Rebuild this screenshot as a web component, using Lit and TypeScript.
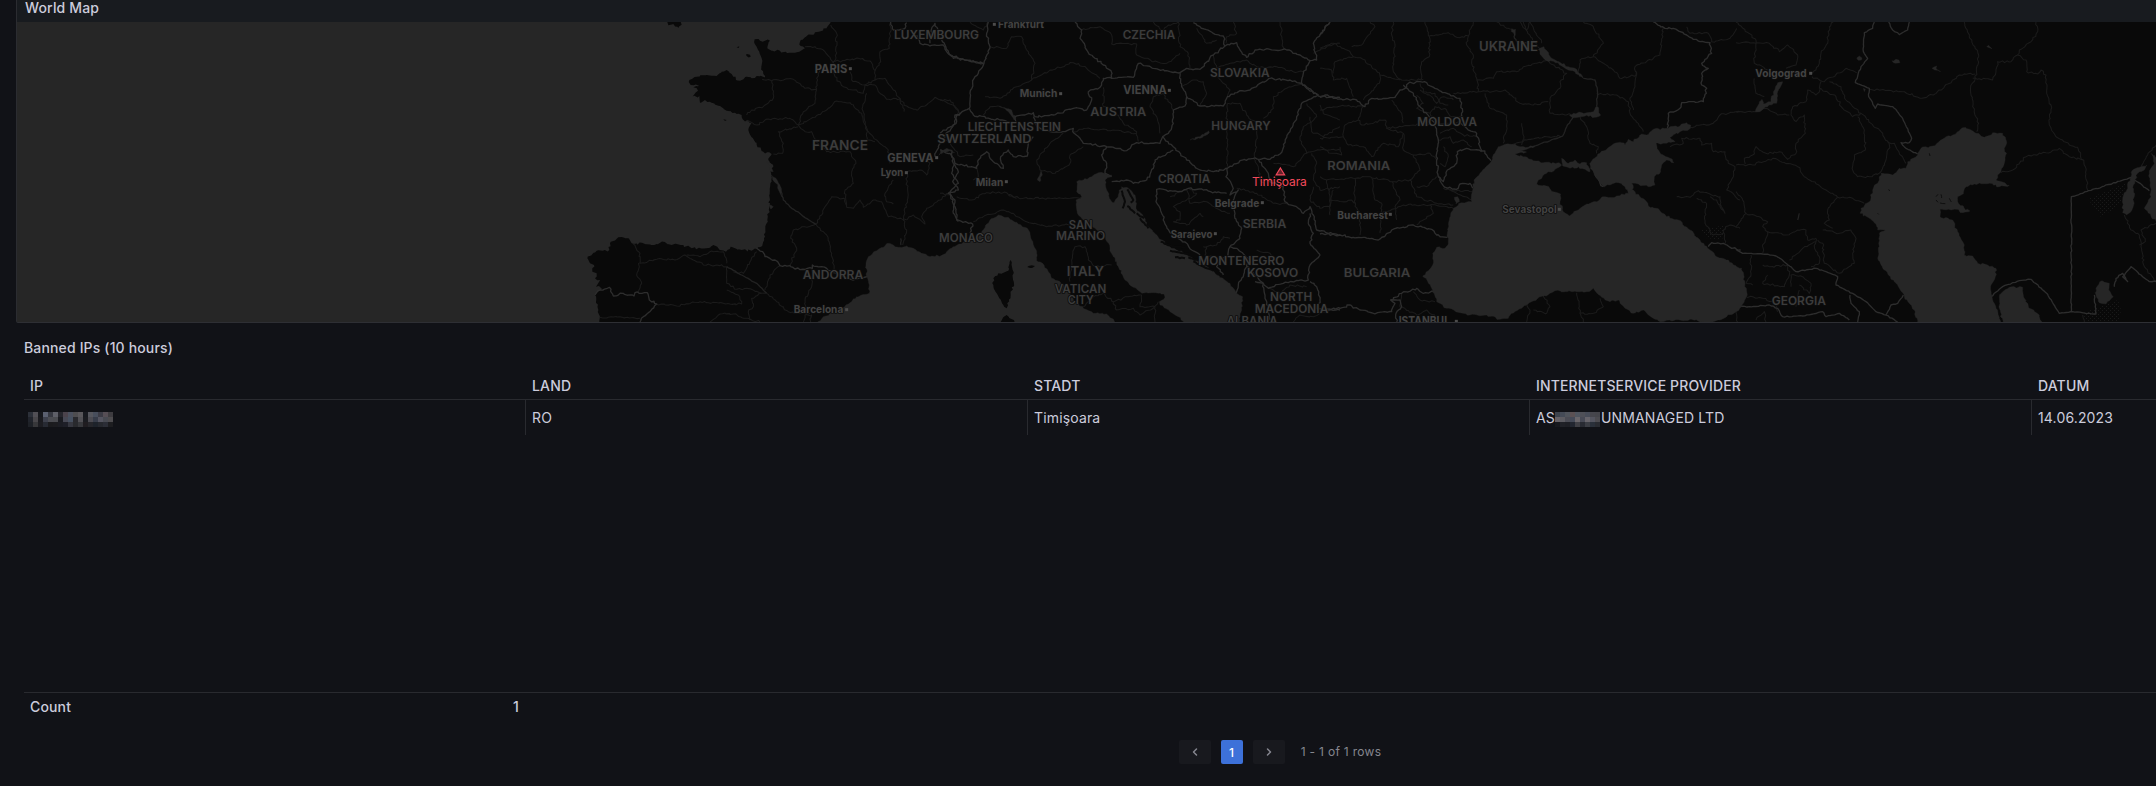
import { LitElement, html, svg, css } from "lit";
import { customElement } from "lit/decorators.js";

type Label = [string, number, number, number, number, number?, number?];

interface Sheet {
  x: number;
  seas?: string[];
  lands?: string[];
  rivers?: string[];
  major?: string[];
  minor?: string[];
  labels?: Label[];
}

/* Adds a deterministic natural irregularity to a coarse outline. */
function rough(src: string, amp: number, closed: boolean): string {
  const pts = src.trim().split(/\s+/).map((p) => p.split(",").map(Number));
  let seed = 7 + Math.abs(pts[0][0] * 31 + pts[0][1] * 17) + pts.length * 13;
  const rnd = () => {
    seed = (seed * 16807 + 11) % 2147483647;
    return seed / 2147483647 - 0.5;
  };
  const out: string[] = [];
  const n = closed ? pts.length : pts.length - 1;
  for (let i = 0; i < n; i++) {
    const a = pts[i];
    const b = pts[(i + 1) % pts.length];
    const len = Math.hypot(b[0] - a[0], b[1] - a[1]);
    const steps = len > 700 ? 1 : Math.max(1, Math.round(len / 7));
    for (let k = 0; k < steps; k++) {
      const t = k / steps;
      const j = k === 0 ? 0 : amp;
      out.push(
        `${(a[0] + (b[0] - a[0]) * t + rnd() * j).toFixed(1)},${(a[1] + (b[1] - a[1]) * t + rnd() * j).toFixed(1)}`,
      );
    }
  }
  if (!closed) out.push(pts[pts.length - 1].join(","));
  return "M" + out.join("L") + (closed ? "Z" : "");
}

/* Map data in thirds of a pixel; each sheet has its own horizontal origin. */
const sheets: Sheet[] = [
  {
    x: 560,
    lands: [
      "812,66 800,85 765,97 735,112 720,125 722,138 735,145 718,155 690,158 660,152 635,152 622,145 630,122 615,122 600,122 584,118 590,140 598,155 605,175 604,205 610,222 615,232 590,228 575,235 560,230 540,242 528,240 515,222 500,210 485,215 470,228 440,225 410,230 388,240 392,255 418,258 400,262 414,272 395,290 418,288 420,308 435,300 455,308 480,318 500,332 525,338 545,345 548,358 575,368 565,390 575,412 590,435 610,455 635,462 625,480 640,500 632,515 634,540 630,600 622,660 612,715 600,742 575,752 545,750 512,740 498,755 475,745 460,735 440,745 395,745 370,735 335,735 310,725 290,732 215,730 205,715 175,712 150,730 148,750 110,752 82,775 90,790 102,795 97,815 110,820 105,835 120,840 108,860 125,865 105,885 108,905 115,930 120,975 4900,975 4900,60",
      "322,66 325,76 340,72 355,84 365,74 364,62 322,62",
      "558,164 570,164 572,170 560,168",
      "530,142 538,139 536,144",
      "490,358 500,360 495,363",
    ],
    seas: [
      "770,970 790,950 830,935 865,912 890,890 928,880 928,855 920,830 918,790 925,770 950,752 985,730 1000,735 1015,742 1040,738 1060,745 1085,760 1110,770 1145,766 1160,755 1180,740 1215,725 1250,715 1270,690 1290,660 1315,645 1345,652 1375,672 1402,685 1415,720 1430,760 1430,782 1448,790 1465,815 1475,835 1500,845 1525,870 1540,900 1570,925 1600,940 1640,942 1655,955 1665,970",
      "634,525 648,535 660,555 665,590 658,575 648,550",
      "628,614 640,620 632,627",
      "620,485 632,490 640,515 634,515",
      "1136,466 1142,452 1160,445 1176,450 1184,458 1170,452 1152,455",
    ],
    rivers: ["660,560 670,600 695,625 725,645 768,673", "500,800 545,825 590,850 620,880", "1023,735 1022,715"],
    major: [
      "590,745 608,755 615,770 645,780 660,797 690,797 705,807 757,805 757,795 785,800 800,805 820,818 850,830 880,840 928,830",
      "105,885 120,870 148,862 160,888 190,880 222,888 225,878 262,878 268,900 290,912 270,935 250,950 240,966",
      "992,66 1000,90 1035,85 1040,68",
      "1070,105 1080,130 1110,138 1150,135 1160,155 1180,175 1215,180 1270,190",
      "1110,130 1115,85 1125,70 1135,90",
      "1200,345 1185,345 1190,365 1165,395 1135,440 1125,470",
      "1176,455 1180,490 1195,515 1178,545 1195,570 1165,580 1185,600 1180,640 1195,665",
    ],
    minor: [
      "812,75 830,100 828,140 828,172 818,188",
      "735,140 765,140 795,155 818,185 870,180 895,175 930,183 945,212 945,240 915,255 875,240 870,215",
      "992,66 988,145 960,155 962,185 945,212",
      "818,185 825,230 850,260 880,270 910,280 915,255 945,255 955,275 980,298 1020,296 1040,318 1070,330 1095,318 1125,292 1185,318 1200,345",
      "945,240 975,235 1000,270 1020,295 1032,335",
      "606,238 635,242 640,295 610,320 575,330 560,345",
      "635,242 700,238 735,265 770,268 765,310 730,335 715,375",
      "770,268 770,235 780,210",
      "560,362 590,375 625,357 690,355 715,375 735,395 755,395 768,425 800,455 870,455 888,490 875,520 880,550 855,570 860,615",
      "715,375 765,352 800,330 830,303 870,308 905,340 920,390 955,425 985,450 990,490",
      "715,380 655,395 670,430 668,460 640,462",
      "920,280 908,320 912,350 922,395 920,420 945,425",
      "768,673 785,645 795,620 815,590 855,597 860,622 880,625 900,600 910,622 940,600 965,605 985,650 1040,660",
      "768,673 700,690 692,715 710,745 690,795",
      "768,673 800,705 815,760 822,810",
      "1040,515 1042,600 1030,660 1040,690 1028,735",
      "1040,515 1080,510 1100,525 1110,490 1085,470",
      "1000,540 975,580 980,605 1000,612",
      "1040,660 1060,645 1095,672 1085,650 1100,625 1140,600 1165,580",
      "220,732 240,760 238,800 230,825 245,850 235,878",
      "240,790 290,778 345,780 375,765 400,780 430,795 470,795 500,800 500,850 530,868 560,865 605,880 620,880",
      "380,765 420,770 450,755 490,755 500,790",
      "590,755 570,785 550,820 520,815",
      "660,797 630,825 615,870",
      "620,880 650,905 685,935 750,940",
      "757,805 755,860 735,900 738,940",
      "290,912 350,918 420,905 510,912 545,912 535,885 500,870",
      "605,880 575,895 580,920 565,935 570,960",
      "450,966 480,942 520,942 560,955 600,966",
      "120,952 180,950 240,955",
      "730,966 735,945 755,945 752,966",
    ],
    labels: [
      ["LUXEMBOURG", 1002, 1257, 118, 34],
      ["PARIS", 764, 862, 218, 34, 871, 206],
      ["FRANCE", 756, 924, 449, 39],
      ["GENEVA", 982, 1121, 487, 34, 1130, 473],
      ["Lyon", 962, 1030, 529, 31, 1039, 518],
      ["ANDORRA", 728, 910, 837, 34],
      ["Barcelona", 701, 850, 939, 31, 860, 929],
    ],
  },
  {
    x: 940,
    lands: [],
    seas: [
      "410,545 430,540 455,530 475,518 492,520 515,525 495,540 500,570 512,600 522,608 535,585 545,560 560,562 585,585 588,625 610,650 625,680 655,712 690,740 740,765 790,790 830,825 870,850 890,880 908,890 905,930 895,970 735,970 715,950 690,935 660,915 658,905 675,892 672,882 640,878 605,880 580,862 555,840 535,800 520,770 510,745 495,710 465,685 430,660 412,640 408,600 425,590 410,575",
      "292,540 303,512 306,520 300,545",
      "750,420 780,410 806,392 808,398 780,415",
      "175,318 215,330 228,355 222,360 205,335",
    ],
    rivers: [],
    major: [
      "5,120 18,142 30,165 75,180 132,190",
      "145,66 140,100 150,140 132,190 105,230 90,280 88,325 50,345 45,370 0,400",
      "405,66 425,90 420,115 440,150 465,175 490,195 513,212 515,235 545,232 580,232 595,190 640,205 690,215 720,218",
      "720,218 740,205 780,208 820,165 855,138 850,108 820,100 780,80 760,68",
      "855,138 890,128 900,150 920,172 945,150 990,148 1040,150 1080,165 1110,182 1130,180 1120,130 1170,66",
      "1110,182 1090,220 1085,250 1050,240 990,235 960,250 930,270 900,272 862,290 850,318 780,318 740,290 725,260 720,218",
      "515,235 490,235 480,262 445,275 455,300 440,330 400,325 340,345 285,350 280,338 255,345 225,350 225,370 180,360 100,345 88,325",
      "740,290 735,318 700,330 700,370 685,400 668,410 660,430 590,428 560,452 500,440 430,430 398,395 400,385 370,395 330,395 290,380 280,350",
      "1085,250 1100,265 1135,285 1085,310 1070,350 1045,400 1020,462 990,478 940,475 900,482 862,505 820,515 780,510 740,480 700,440 668,410",
      "1085,250 1140,290 1200,292",
      "500,440 485,465 500,490 495,520 515,530",
      "515,545 560,540 580,550 620,540 640,505 645,480 700,450",
      "862,505 858,530 880,565 870,585 895,570 880,600 885,640 890,665 905,685 900,715 870,740 890,745 925,775 920,795",
      "860,580 830,578 790,570 745,565 725,575 690,572 650,568 648,605 665,640 680,680 700,705 740,730 755,750 780,765",
      "955,478 985,520 990,545 1030,560 1035,605 1075,625 1090,640 1110,620 1120,645 1130,690 1200,705",
      "1110,640 1105,670 1120,700 1110,730 1140,765 1110,795 1105,840 1075,842 1030,850 985,865 970,850 945,845",
      "870,740 865,770 840,775 830,800 850,825",
      "920,795 910,830 895,855 885,890",
      "920,800 940,820 970,850 975,895 985,920 990,960",
      "1110,845 1130,860 1140,900 1130,925 1200,930",
      "0,450 30,460 45,490 35,520 55,550 30,580 45,620 50,660 98,672 90,700",
      "45,490 110,505 115,480 140,455 160,485 190,505 182,470 205,450 220,470 262,468 265,430 280,410",
    ],
    minor: [
      "150,140 200,145 215,110 245,110 260,150 285,190 275,240 230,260 180,295 135,290",
      "275,240 330,210 400,188 440,205 480,235",
      "145,66 130,90 90,66",
      "425,90 480,80 515,105 515,132 590,132 590,165 640,185 680,190 720,160",
      "640,66 670,95 680,80 715,66 720,140 745,160 750,205",
      "770,85 800,130 830,120",
      "880,66 890,100 860,110 858,130",
      "1020,66 1030,150",
      "1120,160 1160,140 1200,130",
      "820,165 830,205 870,190 920,180 950,200 1010,200 1060,215 1090,215",
      "725,260 760,240 790,245 800,280 780,318",
      "820,215 850,250 870,270 862,290",
      "862,310 860,380 862,440 862,500",
      "862,310 900,310 920,345 950,370 950,400 945,475",
      "1085,250 1040,265 1000,290 1000,325 970,355",
      "700,330 670,280 640,290 630,320 650,350 660,400",
      "490,262 490,320 520,330 550,370 590,395 595,425",
      "400,395 440,385 520,390 590,400",
      "290,480 300,510 345,520 390,490 390,465 430,440",
      "290,480 330,430 370,400",
      "205,585 250,595 330,595 390,595 425,592",
      "50,590 95,600 140,578 200,578 230,595",
      "100,665 130,650 185,630 220,640 260,665 320,680 400,672",
      "390,845 395,780 405,740 435,740 445,780 465,800 515,795",
      "430,920 460,890 490,880 520,905 560,890 605,885",
      "520,905 530,930 580,925 600,945 640,925 655,905",
      "605,885 600,920 645,920 645,966",
      "745,565 770,580 740,600 700,620 720,635 720,660 700,665",
      "690,590 740,570 750,610 800,605 840,630 870,640",
      "700,665 740,675 780,640 790,650",
      "790,740 830,735 850,710 870,715",
      "800,740 795,765 820,770",
      "890,565 950,580 1000,610 1040,612",
      "940,475 955,500 960,540 975,560",
      "1000,490 1060,500 1100,460 1140,450 1200,450",
      "1100,460 1080,420 1090,380 1130,350 1100,310",
      "1115,460 1130,490 1120,540 1140,570 1200,560",
      "1120,560 1110,600 1140,625 1170,620 1180,570",
      "1140,315 1150,340 1200,360",
      "1110,350 1115,395 1150,410 1200,380",
      "0,580 30,585",
      "0,300 30,300 55,330 50,350",
      "110,500 115,530 100,540",
      "130,345 150,320 175,318",
      "0,410 30,430 60,470 100,465",
      "950,750 990,760 1000,780",
      "985,865 1020,880 1050,855 1100,860",
      "1060,966 1080,945 1120,950 1170,930",
    ],
    labels: [
      ["SWITZERLAND", -8, 275, 429, 36],
      ["MONACO", -3, 159, 725, 34],
      ["Frankfurt", 174, 312, 83, 31, 163, 73],
      ["CZECHIA", 548, 706, 118, 34],
      ["SLOVAKIA", 810, 989, 230, 34],
      ["VIENNA", 550, 680, 283, 34, 688, 271],
      ["Munich", 239, 352, 291, 31, 362, 281],
      ["AUSTRIA", 451, 619, 349, 36],
      ["LIECHTENSTEIN", 83, 363, 393, 34],
      ["HUNGARY", 814, 992, 389, 34],
      ["Milan", 107, 190, 557, 31, 199, 545],
      ["CROATIA", 654, 811, 549, 34],
      ["Belgrade", 824, 958, 620, 31, 967, 608],
      ["SERBIA", 908, 1039, 685, 34],
      ["Sarajevo", 692, 818, 715, 31, 826, 701],
      ["SAN", 386, 458, 687, 34],
      ["MARINO", 348, 496, 721, 34],
      ["ITALY", 380, 492, 827, 39],
      ["VATICAN", 344, 499, 879, 34],
      ["CITY", 383, 461, 912, 34],
      ["MONTENEGRO", 775, 1033, 795, 34],
      ["KOSOVO", 921, 1075, 831, 34],
      ["NORTH", 990, 1117, 903, 34],
      ["MACEDONIA", 944, 1165, 938, 34],
      ["ALBANIA", 860, 1013, 975, 34],
    ],
  },
  {
    x: 1320,
    seas: [
      "535,440 560,432 585,432 600,440 645,440 620,448 600,452 620,456 585,462 610,470 640,482 670,488 715,488 725,495 705,508 680,520 655,540 650,552 680,558 700,575 722,582 720,605 730,635 748,648 775,630 800,612 830,605 850,590 885,592 905,582 925,580 925,568 940,570 960,590 975,600 985,618 1010,625 1050,655 1075,660 1110,690 1140,720 1170,750 1190,770 1225,780 1250,800 1265,805 1275,850 1282,885 1265,920 1248,935 1220,950 1180,965 1160,968 1110,958 1060,962 1020,965 985,945 970,930 940,940 915,925 895,900 870,905 845,892 820,865 800,875 770,875 705,872 690,880 635,905 575,940 565,955 540,958 500,945 450,945 420,938 380,925 350,905 342,880 325,850 318,835 308,828 325,812 338,795 338,760 350,742 375,745 385,730 382,700 388,660 400,625 425,608 455,605 458,570 462,540 480,520 510,490 525,460",
      "810,490 840,460 880,432 905,428 915,435 925,418 940,425 965,402 980,405 1000,388 1040,385 1080,378 1100,368 1112,375 1108,388 1080,395 1050,412 1065,425 1030,430 1008,430 1015,450 1030,465 1050,475 1062,488 1040,480 1025,495 1022,515 1003,530 1005,555 985,560 955,552 935,550 940,565 925,578 915,560 895,548 870,555 850,560 830,535 820,515",
      "748,345 760,340 800,338 820,335 830,318 842,345 825,352 800,346 755,352",
      "655,148 672,140 698,176 712,184 745,200 770,208 790,235 765,215 735,205 700,184 680,182 665,168",
      "575,86 587,88 582,110",
      "725,475 745,490 765,480 780,492 800,488 810,515 795,508 775,500 750,505 728,498",
      "403,592 413,590 418,605 408,612",
    ],
    rivers: ["790,235 825,240 832,270 830,318", "760,350 740,380 728,408 660,432 635,442", "582,108 590,125 630,130"],
    major: [
      "0,105 30,66",
      "0,292 15,285 40,295 75,298 110,300 135,320 150,298 190,295 225,292 240,270 260,262 265,250 300,245 320,248 345,265 375,278 420,295 428,335 420,365 440,385 470,400 480,440 500,465 512,482",
      "250,255 280,280 300,320 345,370 355,420 350,480 355,530 372,560 410,568 420,552 450,550 458,565",
      "355,530 370,545 382,510 410,490 412,455 440,445 475,450 485,455",
      "0,702 60,705 100,712 130,712 175,720 215,690 280,675 335,688 350,705 382,712",
      "0,930 60,925 90,915 120,930 160,940 215,935 225,910 212,900 245,880 290,865 310,880 340,875",
      "212,900 240,900 245,920 228,940 230,966",
      "1000,66 1035,85 1060,85 1100,105 1140,125 1170,128 1175,160 1145,190 1165,205 1145,220 1145,255 1160,265 1150,305 1085,308 1080,325 1045,340 1042,385",
      "1165,740 1175,728 1210,730 1235,745 1262,750",
      "810,490 825,525 850,560",
    ],
    minor: [
      "0,145 40,130 90,155 100,170 135,180 180,225 245,240 310,238",
      "40,220 45,185 100,170",
      "0,205 35,210 40,240 80,235 100,290",
      "95,140 125,135 165,80 150,66",
      "180,225 178,250 130,300",
      "220,66 215,105 225,140 220,215 240,240",
      "315,66 328,110 328,170 305,185 302,240",
      "328,108 385,98 410,112 445,108 460,66",
      "445,108 440,135 460,165 455,190 470,235 475,275 400,280",
      "470,240 520,235 530,215 590,215 610,200 650,190 690,180",
      "530,66 560,85 580,88",
      "610,66 620,90 630,66 665,130",
      "600,66 690,190 740,220 720,245 720,265 690,295 690,340 755,345",
      "475,275 540,275 555,270 600,310 640,315 685,305",
      "495,280 510,325 560,345 560,380 550,430",
      "605,370 612,410 605,435",
      "560,435 620,420 680,410 728,408",
      "790,66 820,80 850,130 820,170 780,180 775,225",
      "820,170 880,210 900,235 950,225 945,200 1000,175 1020,165 1030,85",
      "830,280 890,285 925,305 930,340 955,370 970,395",
      "950,215 945,260 930,300 940,330",
      "780,350 800,380 810,430 835,440 830,460",
      "1100,80 1110,100 1165,100 1175,125 1230,115 1250,85",
      "1112,382 1180,370 1200,345 1260,335",
      "1050,440 1090,430 1085,415 1140,415 1145,435 1175,430 1180,455 1215,455 1225,490 1245,500 1240,530 1220,570 1260,600",
      "1070,590 1110,592 1135,572 1175,585 1200,590 1200,620 1215,640 1190,600 1170,590",
      "1130,595 1160,610 1155,670 1180,705 1210,700",
      "1215,730 1210,690 1230,675 1260,685",
      "290,285 310,310 290,325 330,340 345,320 380,330 395,350 430,350",
      "300,270 335,290 350,310 370,290 400,300",
      "330,340 350,370 390,370 420,365",
      "355,420 390,410 400,430 430,420 455,440",
      "360,400 400,385 430,405 470,410",
      "300,250 310,275 345,280 360,310 385,315",
      "370,440 385,470 375,500 360,490",
      "0,330 40,320 80,318 135,320",
      "130,320 115,360 125,375 195,360 200,385 280,375 330,372",
      "215,300 245,340 250,370",
      "115,360 75,375 70,410 0,415",
      "70,410 85,435 130,440 155,470 190,430 235,440 250,400 200,385",
      "0,440 35,460 65,465 60,440",
      "250,400 250,450 280,465 330,460 350,480",
      "280,465 300,510 270,540 215,545 150,530 100,535 20,540 0,530",
      "20,540 30,595 30,645",
      "105,535 102,605 120,640 120,705",
      "155,535 165,600 185,610 180,700",
      "215,545 240,600 225,620 230,660",
      "270,540 290,590 350,610 400,615",
      "350,530 320,560 290,560",
      "185,640 250,615 330,615 340,640 290,675",
      "330,615 400,625",
      "370,565 400,572 458,575",
      "372,560 410,580 455,600",
      "245,880 240,920 290,945 320,930 345,950",
      "280,875 300,900 345,905",
      "620,966 630,930 620,910",
      "670,885 690,920 680,940 640,930",
      "770,878 780,940 820,940 850,920 840,895",
      "780,940 790,966",
      "30,600 80,605 95,600 108,610",
    ],
    labels: [
      ["UKRAINE", 477, 654, 152, 38],
      ["MOLDOVA", 292, 471, 378, 34],
      ["ROMANIA", 22, 211, 509, 37],
      ["Bucharest", 52, 204, 656, 31, 211, 643],
      ["BULGARIA", 71, 271, 831, 37],
      ["Sevastopol", 547, 710, 640, 31, 718, 628],
      ["ISTANBUL", 236, 390, 975, 34, 409, 964],
    ],
  },
  {
    x: 1736,
    seas: [
      "680,383 705,390 720,400 745,412 770,398 800,400 812,425 805,445 812,460 805,490 785,525 780,540 820,556 790,560 760,550 715,552 690,560 682,582 665,590 665,605 685,625 702,633 680,638 660,628 612,628 612,650 650,660 665,695 685,735 685,765 710,768 725,790 755,795 780,805 778,830 765,855 768,890 780,925 795,970 545,970 535,930 505,890 480,850 445,810 425,775 428,730 430,700 448,690 425,690 420,672 400,655 372,640 375,625 400,605 410,570 430,540 435,520 470,525 490,505 510,505 515,485 545,465 555,445 590,438 630,410 650,405",
      "790,890 800,875 820,862 860,862 865,895 880,925 910,945 918,970 800,970 790,925",
      "1185,530 1190,510 1215,500 1232,495 1225,510 1205,520 1192,555 1195,590 1190,625 1172,645 1160,638 1160,600 1170,575",
      "1245,460 1265,475 1265,670 1225,625 1245,590 1240,520 1255,490",
      "1080,865 1098,842 1120,850 1118,870 1132,890 1110,912 1090,908 1080,885",
      "58,335 70,305 78,298 82,312 105,305 112,275 125,248 140,245 125,275 122,310 95,320 72,335",
      "362,174 370,168 378,174 370,181",
      "468,182 480,178 492,188 478,190",
      "588,205 602,198 600,205 614,215 596,210",
      "752,140 758,136 768,146",
      "382,265 388,268 385,275",
    ],
    rivers: ["185,660 190,640"],
    major: [
      "415,66 410,85 385,98 382,155 395,175 375,200 358,248 400,265 398,290 418,325 425,312 470,320 500,355 527,415 520,428 495,428 510,445 545,462",
      "458,66 470,90 490,104 515,90 520,66",
      "765,890 800,860 850,842 885,838 930,878 970,940 1010,935 1080,942 1075,885",
      "1006,935 1006,590 1185,532 1240,572",
      "1135,860 1140,835 1160,820 1175,845 1160,830 1185,800 1220,830 1240,845 1262,845",
      "0,748 20,760 80,762 120,768 150,790 180,815 240,805 270,815 305,830 300,855 350,880 390,905 420,935 450,945 465,915 485,910 502,885",
      "0,920 40,920 100,915 125,925 140,950 200,948 260,935 270,950 310,940 340,960",
      "342,885 345,910 370,935 365,966",
      "450,945 485,966",
    ],
    minor: [
      "0,66 60,120 55,190 95,210",
      "0,128 100,130 130,155 155,135 185,165 180,195 150,205",
      "292,66 280,80 275,130 255,160 250,190 228,220",
      "228,230 265,245 330,205 362,218",
      "255,245 250,265 300,290 320,325 350,350 375,340 330,300 315,260 280,245",
      "255,265 240,285 215,270 210,305 170,320 165,345 180,365 205,345 208,400 180,430 180,460 155,478 130,455 90,460 60,440 50,465 25,475 28,492",
      "375,340 405,370 440,400 460,435 450,480 430,520",
      "365,350 385,390 388,450 355,465 350,510 365,530 400,530 430,520",
      "455,425 475,430 490,460 510,490",
      "0,335 60,335 90,325 125,345 160,345",
      "0,495 50,495 110,475 185,500 205,530 270,570 305,592 350,595 385,610",
      "305,592 275,630 280,660 265,670 290,685",
      "55,235 60,280 85,290",
      "400,268 500,275 558,295 600,280 670,225 718,222",
      "685,66 700,110 728,165 718,235 705,255 710,320 728,370 722,395",
      "900,66 905,95 885,125 850,150 845,165 825,185 785,185 780,215 770,240 710,235",
      "845,165 870,180 872,215 905,222 915,210 930,225 932,280 945,315 940,375 960,410 1000,435 1025,442 1048,500 1055,570",
      "795,518 830,510 870,470 930,458 970,445 1000,470 1040,480",
      "0,575 20,600 30,640 70,650 95,665 80,680 95,695 150,705 185,690 210,690 215,720 240,715",
      "30,640 0,680",
      "95,695 80,740 80,760",
      "240,715 235,740 250,770 250,790 225,800",
      "245,720 260,730 265,790 310,820 355,790 350,760 360,715 345,690 310,700 260,690",
      "240,725 200,745 160,780",
      "45,765 45,820 30,850 50,855",
      "80,795 100,800 155,795 160,825 145,860 80,850 95,825",
      "165,860 165,825 200,830 225,850 220,880 190,855",
      "30,890 80,895 120,910 125,935",
      "60,960 85,935 90,966",
      "180,920 190,870",
      "1165,645 1185,690 1210,705 1215,740 1225,800 1260,845",
      "1260,670 1215,690 1228,725 1210,735",
      "1260,435 1235,465 1215,500",
      "1045,966 1040,945",
      "0,925 5,966",
    ],
    labels: [
      ["Volgograd", 58, 212, 232, 31, 224, 220],
      ["GEORGIA", 107, 270, 916, 36],
    ],
  },
];

/* Small islands, drawn as short strokes over the sea. */
const isles = [
  "545,572 555,605 548,625", "562,568 580,600 572,608", "562,618 585,640", "590,640 612,655", "600,655 625,685",
  "662,725 700,740 735,742", "690,752 745,762", "705,772 735,775", "745,772 775,782", "760,784 790,800 820,812",
];

const corsica = [
  "212,780 216,800 222,850 212,885 200,925 190,915 178,895 170,880 160,855 160,835 175,820 205,812",
  "178,970 200,945 222,960 225,970",
  "262,801 275,796 285,798 270,804",
];

const caspianIsles = [
  "600,590 606,583", "600,600 606,607", "615,583 617,594", "640,595 646,606", "612,609 628,611", "580,460 582,468", "458,568 461,573", "425,640 428,643", "418,730 422,705",
];

@customElement("world-map")
class WorldMap extends LitElement {
  static styles = css`
    :host { display: block; height: 300px; overflow: hidden; background: #262626; }
    svg { display: block; }
    .land { fill: #090909; }
    .sea { fill: #262626; stroke: #262626; stroke-width: 1; }
    .major, .minor, .river, .isle { fill: none; stroke-linejoin: round; }
    .major { stroke: #2d2d2d; stroke-width: 4; }
    .minor { stroke: #1b1b1b; stroke-width: 3.2; }
    .river { stroke: #222; stroke-width: 4; }
    .isle { stroke: #0a0a0a; stroke-width: 6; }
    .islet { stroke-width: 2.5; }
    .dotted { fill: url(#grain); }
    .label {
      font-family: Inter, "Liberation Sans", sans-serif;
      font-weight: 600;
      fill: #3c3c3c;
      stroke: #0d0d0d;
      stroke-width: 5;
      stroke-linejoin: round;
      paint-order: stroke;
    }
    .city { fill: #434343; font-weight: 700; }
    .town { fill: #4b4b4b; }
    .marker { fill: #f2495c; fill-opacity: 0.4; stroke: #f2495c; stroke-width: 1.2; }
    .place { fill: #f2495c; font: 400 12px Inter, "Liberation Sans", sans-serif; }
  `;

  render() {
    const at = (s: Sheet, body: unknown) => svg`<g transform="translate(${s.x} 0) scale(0.33333)">${body}</g>`;
    const mid = sheets[1];
    return html`<svg width="2139" height="300" viewBox="17 22 2139 300">
      <defs>
        <pattern id="grain" width="4" height="4" patternUnits="userSpaceOnUse">
          <rect width="1" height="1" fill="#191919"></rect><rect x="2" y="2" width="1" height="1" fill="#191919"></rect>
        </pattern>
      </defs>
      ${sheets.map((s) => at(s, (s.lands ?? []).map((d) => svg`<path class="land" d=${rough(d, 8, true)}></path>`)))}
      ${sheets.map((s) => at(s, (s.minor ?? []).map((d) => svg`<path class="minor" d=${rough(d, 6, false)}></path>`)))}
      <path class="dotted" d="M2088 199 L2126 183 L2120 205 L2101 217Z M2083 313 L2118 300 L2121 310 L2119 322 L2086 322Z M1701 230 L1725 225 L1722 240 L1706 238Z"></path>
      ${sheets.map((s) => at(s, (s.major ?? []).map((d) => svg`<path class="major" d=${rough(d, s.x === 1736 ? 3 : 6, false)}></path>`)))}
      ${sheets.map((s) => at(s, (s.rivers ?? []).map((d) => svg`<path class="river" d=${rough(d, 3, false)}></path>`)))}
      ${sheets.map((s) => at(s, (s.seas ?? []).map((d) => svg`<path class="sea" d=${rough(d, 6, true)}></path>`)))}
      ${at(mid, corsica.map((d) => svg`<path class="land" d=${rough(d, 7, true)}></path>`))}
      ${at(mid, isles.map((d) => svg`<path class="isle" d=${rough(d, 3, false)}></path>`))}
      ${at(sheets[3], caspianIsles.map((d) => svg`<path class="isle islet" d=${rough(d, 2, false)}></path>`))}
      ${sheets.map((s) => at(s, (s.labels ?? []).map(([name, x0, x1, y, size, dx, dy]) => svg`
        <text class="label ${dx === undefined ? "" : "city"}" x=${x0} y=${y} font-size=${size} textLength=${x1 - x0} lengthAdjust="spacingAndGlyphs">${name}</text>
        ${dx === undefined ? null : svg`<rect class="town" x=${dx - 4.5} y=${(dy ?? 0) - 4.5} width="9" height="9"></rect>`}`)))}
      <path class="marker" d="M1280.4 168 L1284.6 174.8 H1276.2 Z"></path>
      <text class="place" x="1252" y="186" textLength="55">Timişoara</text>
    </svg>`;
  }
}

const ipBlocks = [
  "2c3039 514f55 17181d 5b6070 363841 5e5f68 26262d 4b434c 4b505e 4e4d50 59575b 181a20 55565d 484e5c 3b3b45 564e55 3e3c40",
  "21242c 48464a 1b1b20 3d404c 4b4c52 4a4b50 1a1b21 474854 465060 29292e 515055 1b1c21 4c4b52 373c49 545460 484a52 4d4b4e",
  "1e2127 37373a 1d1d22 272a33 1b1b1e 1c1c20 1c1d24 1e1f28 363740 292a2e 37383c 201d21 26262b 1e232b 26282e 2b2d36 1d1d20",
];
const asBlocks = [
  "3d434d 454b57 50545c 5b5154 50555f 4f5058 484c58 46464d 45454b",
  "646066 5d5c62 4b4c55 454a58 6a666b 484a56 67646b 545560 4c4b50",
  "17181d 202127 1e1f25 222630 3f3f45 292b33 3b3d44 2a303a 292b31",
];

@customElement("pixel-mask")
class PixelMask extends LitElement {
  static properties = { rows: { attribute: false } };
  declare rows: string[];
  static styles = css`
    :host { display: block; }
    .row { display: flex; height: 5px; }
    .cell { width: 5px; height: 5px; }
  `;
  render() {
    return this.rows.map(
      (r) => html`<div class="row">${r.split(" ").map((c) => html`<span class="cell" style="background:#${c}"></span>`)}</div>`,
    );
  }
}

@customElement("app-root")
class AppRoot extends LitElement {
  static styles = css`
    :host {
      display: flex;
      flex-direction: column;
      height: 786px;
      overflow: hidden;
      background: #111217;
      color: #ccccdc;
      font: 400 14px/22px Inter, "Liberation Sans", sans-serif;
      letter-spacing: 0.15px;
    }
    .map-panel {
      flex: none;
      margin-left: 16px;
      border-left: 1px solid #2b2c31;
      border-bottom: 1px solid #2e2f34;
      border-bottom-left-radius: 2px;
      background: #181b1f;
    }
    .title { font-weight: 500; white-space: nowrap; }
    .map-panel .title { height: 22px; padding-left: 8px; line-height: 16px; box-sizing: border-box; }
    .table-panel { display: flex; flex-direction: column; flex: 1; width: 2512px; padding-left: 24px; }
    .table-panel .title { height: 22px; margin-top: 14px; }
    .cells { display: flex; }
    .cell { flex: none; width: 502px; box-sizing: border-box; padding: 0 6px; white-space: nowrap; }
    .head { height: 41px; align-items: flex-end; border-bottom: 1px solid #292a2f; box-sizing: border-box; font-weight: 500; }
    .head .cell { line-height: 26px; }
    .body { height: 292px; align-items: flex-start; }
    .body .cell { display: flex; align-items: center; height: 35px; border-right: 1px solid #292a2f; }
    .body .ip { padding-left: 4px; }
    .mask { margin: 3px 0 0; }
    .org { margin-left: 1px; }
    .foot { border-top: 1px solid #292a2f; height: 48px; box-sizing: border-box; }
    .foot .cell { display: flex; justify-content: space-between; line-height: 28px; font-weight: 500; padding-right: 7px; }
    .pager { display: flex; align-items: center; justify-content: center; }
    .nav { display: flex; align-items: center; justify-content: center; width: 32px; height: 24px; border-radius: 2px; background: #18191e; }
    .nav svg { display: block; fill: none; stroke: #85868f; stroke-width: 1.5; stroke-linecap: round; stroke-linejoin: round; }
    .page { width: 22px; height: 24px; margin: 0 10px; border-radius: 2px; background: #3d71d9; color: #fff; font-size: 12px; font-weight: 500; line-height: 25px; text-align: center; }
    .summary { margin-left: 16px; color: #85868f; font-size: 12px; line-height: 24px; letter-spacing: 0.3px; }
  `;

  render() {
    const heads = ["IP", "LAND", "STADT", "INTERNETSERVICE PROVIDER", "DATUM"];
    return html`
      <section class="map-panel">
        <div class="title">World Map</div>
        <world-map></world-map>
      </section>
      <section class="table-panel">
        <div class="title">Banned IPs (10 hours)</div>
        <div class="cells head">${heads.map((h) => html`<div class="cell">${h}</div>`)}</div>
        <div class="cells body">
          <div class="cell ip"><pixel-mask class="mask" .rows=${ipBlocks}></pixel-mask></div>
          <div class="cell">RO</div>
          <div class="cell">Timişoara</div>
          <div class="cell"><span>AS</span><pixel-mask class="mask" .rows=${asBlocks}></pixel-mask><span class="org">UNMANAGED LTD</span></div>
          <div class="cell">14.06.2023</div>
        </div>
        <div class="cells foot"><div class="cell"><span>Count</span><span>1</span></div></div>
        <nav class="pager">
          <span class="nav"><svg width="8" height="10" viewBox="0 0 8 10"><path d="M5.5 2 L2.5 5 L5.5 8"></path></svg></span>
          <span class="page">1</span>
          <span class="nav"><svg width="8" height="10" viewBox="0 0 8 10"><path d="M2.5 2 L5.5 5 L2.5 8"></path></svg></span>
          <span class="summary">1 - 1 of 1 rows</span>
        </nav>
      </section>
    `;
  }
}
